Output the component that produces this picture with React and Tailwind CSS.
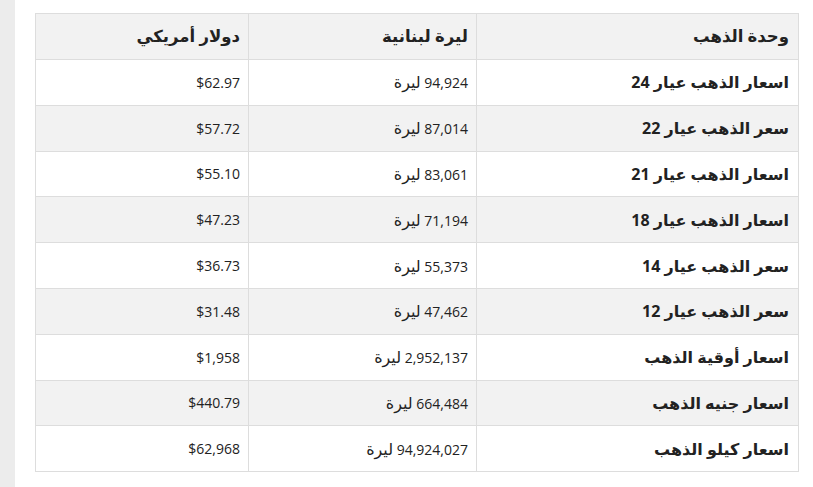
const rows = [
  ["اسعار الذهب عيار 24", "94,924", "$62.97"],
  ["سعر الذهب عيار 22", "87,014", "$57.72"],
  ["اسعار الذهب عيار 21", "83,061", "$55.10"],
  ["اسعار الذهب عيار 18", "71,194", "$47.23"],
  ["سعر الذهب عيار 14", "55,373", "$36.73"],
  ["سعر الذهب عيار 12", "47,462", "$31.48"],
  ["اسعار أوقية الذهب", "2,952,137", "$1,958"],
  ["اسعار جنيه الذهب", "664,484", "$440.79"],
  ["اسعار كيلو الذهب", "94,924,027", "$62,968"],
];

const App = () => {
  return (
    <div className="flex min-h-[487px] bg-white text-[#222] font-['Open_Sans','DejaVu_Sans',sans-serif] text-[14px]">
      {/* bande grise à gauche */}
      <div className="w-[15px] shrink-0 bg-[#ececec]" />
      <div className="flex-1 pl-[20px] pr-[14px] pt-[13px]">
        <table dir="rtl" className="w-full border-collapse table-fixed">
          <colgroup>
            <col className="w-[322px]" />
            <col className="w-[228px]" />
            <col />
          </colgroup>
          <thead>
            <tr className="h-[46px] bg-[#f2f2f2]">
              <th className="border border-[#dddddd] px-[9px] text-right font-bold text-[16.5px]">وحدة الذهب</th>
              <th className="border border-[#dddddd] px-[8px] text-right font-bold text-[16.5px]">ليرة لبنانية</th>
              <th className="border border-[#dddddd] px-[8px] text-right font-bold text-[16.5px]">دولار أمريكي</th>
            </tr>
          </thead>
          <tbody>
            {rows.map((r, i) => (
              <tr key={i} className={`h-[45.8px] ${i % 2 === 1 ? "bg-[#f2f2f2]" : "bg-white"}`}>
                <td className="border border-[#dddddd] px-[9px] text-right font-bold text-[16px]">{r[0]}</td>
                <td className="border border-[#dddddd] px-[8px] text-right">
                  {r[1]} <span className="text-[16px]">ليرة</span>
                </td>
                <td className="border border-[#dddddd] px-[8px] text-right">{r[2]}</td>
              </tr>
            ))}
          </tbody>
        </table>
      </div>
    </div>
  );
};

export default App;
